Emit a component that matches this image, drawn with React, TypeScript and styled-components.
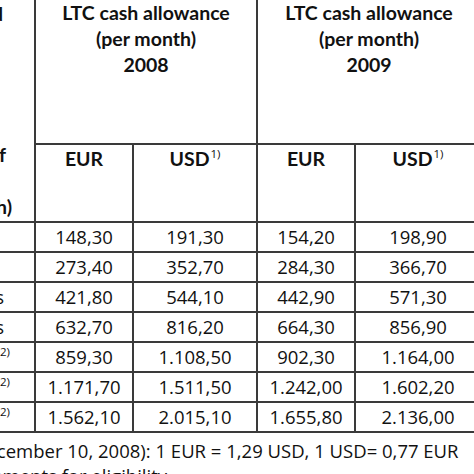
import React from "react";
import styled, { createGlobalStyle } from "styled-components";

const Global = createGlobalStyle`
  html, body { margin: 0; padding: 0; background: #fff; overflow: hidden; }
  body { font-family: "Open Sans", Lato, sans-serif; color: #111; }
`;

const Page = styled.div`
  width: 474px;
  height: 474px;
  overflow: hidden;
`;

const Sheet = styled.div`
  margin-left: -166px;
  margin-top: -3px;
  width: 760px;
`;

const Table = styled.table`
  border-collapse: collapse;
  table-layout: fixed;
  width: 646px;
  font-size: 18.5px;
`;

const Cell = styled.td<{ $head?: boolean; $top?: boolean }>`
  border: 2px solid #3a3a3a;
  padding: ${(p) => (p.$top ? "1px 4px 0" : "0 4px")};
  text-align: center;
  vertical-align: ${(p) => (p.$top ? "top" : "middle")};
  font-family: ${(p) => (p.$head ? "Lato, 'Open Sans', sans-serif" : "'Open Sans', Lato, sans-serif")};
  font-size: ${(p) => (p.$head ? "19.5px" : "18.5px")};
  font-weight: ${(p) => (p.$head ? 700 : 400)};
  line-height: 26px;
  height: 28px;
  white-space: nowrap;
`;

const StubCell = styled.td<{ $head?: boolean }>`
  border: 2px solid #3a3a3a;
  padding: 0;
  height: 28px;
  font-family: ${(p) => (p.$head ? "Lato, 'Open Sans', sans-serif" : "'Open Sans', Lato, sans-serif")};
  font-size: ${(p) => (p.$head ? "19.5px" : "18.5px")};
  font-weight: ${(p) => (p.$head ? 700 : 400)};
  line-height: 26px;
  white-space: nowrap;
  text-align: right;
  vertical-align: middle;
  overflow: hidden;
`;

const StubHead = styled.div`
  height: 219px;
  display: flex;
  flex-direction: column;
  justify-content: space-between;
  padding-top: 1px;
`;

const StubLine = styled.div<{ $trail: number }>`
  padding-right: ${(p) => p.$trail}px;
`;

const Sup = styled.sup`
  font-family: "Open Sans", sans-serif;
  font-size: 11.5px;
  font-weight: 400;
  line-height: 0;
  vertical-align: 0;
  position: relative;
  top: -8px;
  margin-left: 1px;
`;

const HeadRow1 = styled.tr`
  height: 146px;
`;

const HeadRow2 = styled.tr`
  height: 78px;
`;

const Note = styled.p<{ $offset: number }>`
  margin: 0;
  margin-left: ${(p) => p.$offset}px;
  font-size: 18.5px;
  line-height: 25px;
  white-space: nowrap;
`;

const Notes = styled.div`
  padding-top: 5px;
`;

const rows: { label: React.ReactNode; trail: number; v: string[] }[] = [
  { label: "Level 0", trail: 60, v: ["148,30", "191,30", "154,20", "198,90"] },
  { label: "Level I", trail: 60, v: ["273,40", "352,70", "284,30", "366,70"] },
  { label: "Level II: 120 hours", trail: 30, v: ["421,80", "544,10", "442,90", "571,30"] },
  { label: "Level III: 180 hours", trail: 30, v: ["632,70", "816,20", "664,30", "856,90"] },
  { label: <>Level V<Sup>2)</Sup></>, trail: 24, v: ["859,30", "1.108,50", "902,30", "1.164,00"] },
  { label: <>Level VI<Sup>2)</Sup></>, trail: 24, v: ["1.171,70", "1.511,50", "1.242,00", "1.602,20"] },
  { label: <>Level VII<Sup>2)</Sup></>, trail: 24, v: ["1.562,10", "2.015,10", "1.655,80", "2.136,00"] },
];

export default function App() {
  return (
    <Page>
      <Global />
      <Sheet>
        <Table>
          <colgroup>
            <col style={{ width: 200 }} />
            <col style={{ width: 98 }} />
            <col style={{ width: 124 }} />
            <col style={{ width: 98 }} />
            <col style={{ width: 126 }} />
          </colgroup>
          <tbody>
            <HeadRow1>
              <StubCell $head rowSpan={2}>
                <StubHead>
                  <StubLine $trail={31}>Care level and</StubLine>
                  <div>
                    <StubLine $trail={28}>Number of</StubLine>
                    <StubLine $trail={60}>hours (per</StubLine>
                    <StubLine $trail={22}>month)</StubLine>
                  </div>
                </StubHead>
              </StubCell>
              <Cell $head $top colSpan={2}>
                LTC cash allowance
                <br />
                (per month)
                <br />
                2008
              </Cell>
              <Cell $head $top colSpan={2}>
                LTC cash allowance
                <br />
                (per month)
                <br />
                2009
              </Cell>
            </HeadRow1>
            <HeadRow2>
              <Cell $head $top>EUR</Cell>
              <Cell $head $top>
                USD<Sup>1)</Sup>
              </Cell>
              <Cell $head $top>EUR</Cell>
              <Cell $head $top>
                USD<Sup>1)</Sup>
              </Cell>
            </HeadRow2>
            {rows.map((r, i) => (
              <tr key={i}>
                <StubCell>
                  <StubLine $trail={r.trail}>{r.label}</StubLine>
                </StubCell>
                {r.v.map((x, j) => (
                  <Cell key={j}>{x}</Cell>
                ))}
              </tr>
            ))}
          </tbody>
        </Table>
        <Notes>
          <Note $offset={-60}>
            1) Exchange rate (as of December 10, 2008): 1 EUR = 1,29 USD, 1 USD= 0,77 EUR
          </Note>
          <Note $offset={-8}>
            2) Additional requirements for eligibility
          </Note>
        </Notes>
      </Sheet>
    </Page>
  );
}
